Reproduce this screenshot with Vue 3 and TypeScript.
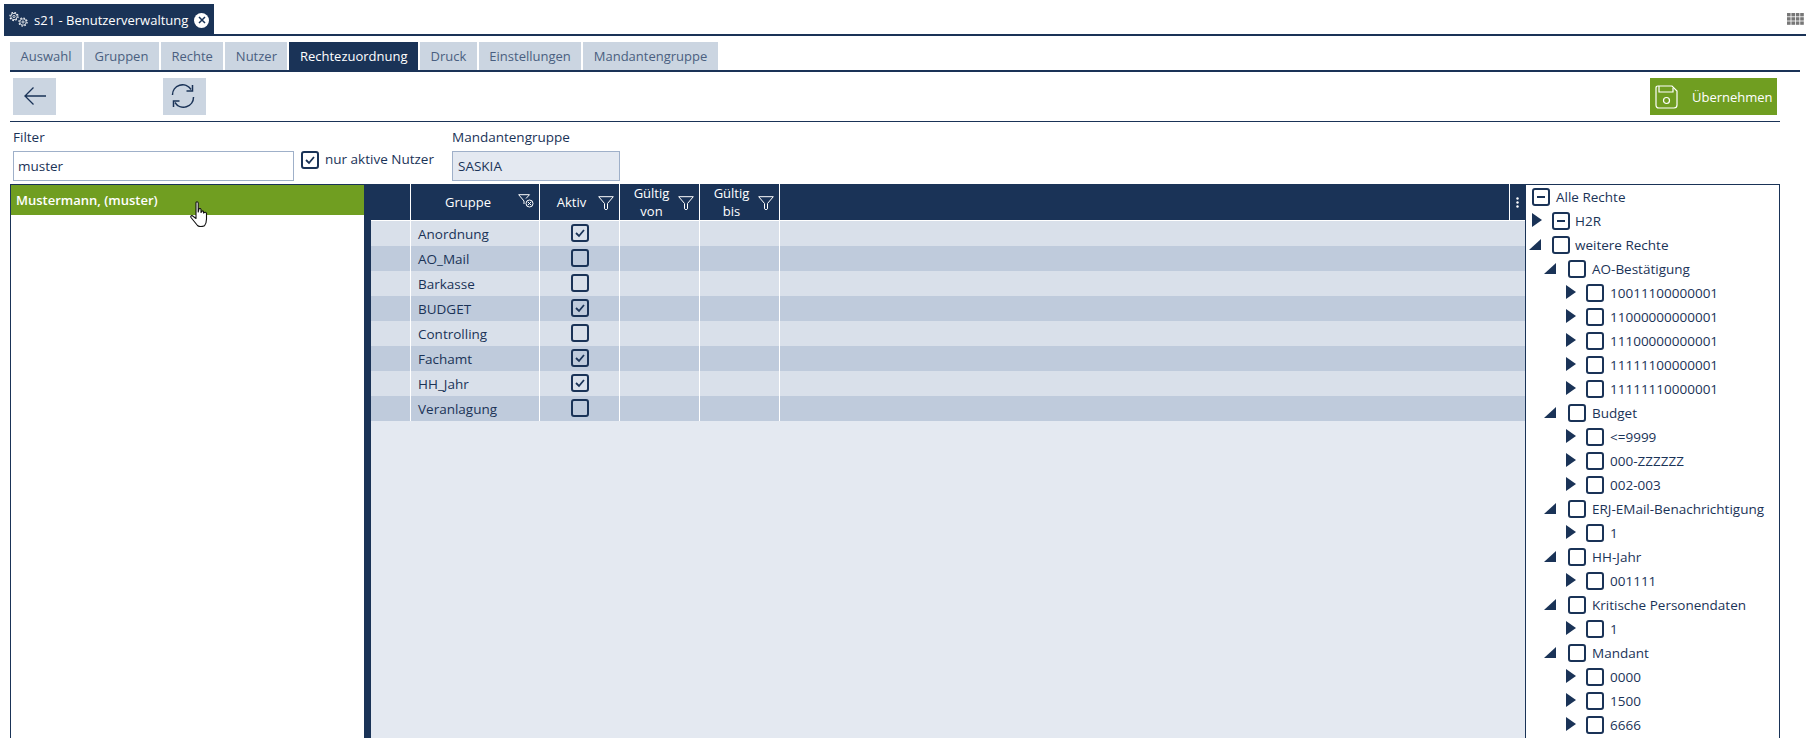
<script setup lang="ts">
const tabs = ['Auswahl', 'Gruppen', 'Rechte', 'Nutzer', 'Rechtezuordnung', 'Druck', 'Einstellungen', 'Mandantengruppe']
const rows = [
  { name: 'Anordnung', on: true },
  { name: 'AO_Mail', on: false },
  { name: 'Barkasse', on: false },
  { name: 'BUDGET', on: true },
  { name: 'Controlling', on: false },
  { name: 'Fachamt', on: true },
  { name: 'HH_Jahr', on: true },
  { name: 'Veranlagung', on: false },
]
type Node = { t: string; l: number; a?: 'r' | 'd'; m?: boolean }
const tree: Node[] = [
  { t: 'Alle Rechte', l: 0, m: true },
  { t: 'H2R', l: 1, a: 'r', m: true },
  { t: 'weitere Rechte', l: 1, a: 'd' },
  { t: 'AO-Bestätigung', l: 2, a: 'd' },
  { t: '10011100000001', l: 3, a: 'r' },
  { t: '11000000000001', l: 3, a: 'r' },
  { t: '11100000000001', l: 3, a: 'r' },
  { t: '11111100000001', l: 3, a: 'r' },
  { t: '11111110000001', l: 3, a: 'r' },
  { t: 'Budget', l: 2, a: 'd' },
  { t: '<=9999', l: 3, a: 'r' },
  { t: '000-ZZZZZZ', l: 3, a: 'r' },
  { t: '002-003', l: 3, a: 'r' },
  { t: 'ERJ-EMail-Benachrichtigung', l: 2, a: 'd' },
  { t: '1', l: 3, a: 'r' },
  { t: 'HH-Jahr', l: 2, a: 'd' },
  { t: '001111', l: 3, a: 'r' },
  { t: 'Kritische Personendaten', l: 2, a: 'd' },
  { t: '1', l: 3, a: 'r' },
  { t: 'Mandant', l: 2, a: 'd' },
  { t: '0000', l: 3, a: 'r' },
  { t: '1500', l: 3, a: 'r' },
  { t: '6666', l: 3, a: 'r' },
]
const indent = [6, 6, 18, 40]
const funnel = 'M.7 .7H15.300L9.500 7.500V12.800L8 14L6.500 12.800V7.500Z'
</script>

<template>
  <div class="app">
    <header class="topbar">
      <div class="apptab">
        <svg class="gears" width="20" height="20" viewBox="0 0 20 20" fill="none" stroke="#fff">
          <circle cx="6" cy="6.500" r="4.100" stroke-width="1.100" stroke-dasharray="1.600 1.620" />
          <circle cx="6" cy="6.500" r="3.200" stroke-width=".8" />
          <circle cx="6" cy="6.500" r="1.100" stroke-width=".8" />
          <circle cx="15" cy="12" r="4.100" stroke-width="1.100" stroke-dasharray="1.600 1.620" />
          <circle cx="15" cy="12" r="3.200" stroke-width=".8" />
          <circle cx="15" cy="12" r="1.100" stroke-width=".8" />
        </svg>
        <span class="apptitle">s21 - Benutzerverwaltung</span>
        <span class="close">
          <svg width="8" height="8" viewBox="0 0 8 8" stroke="#1a3357" stroke-width="1.500"><path d="M1 1L7 7M7 1L1 7" /></svg>
        </span>
      </div>
      <svg class="grid" width="17" height="12" viewBox="0 0 17 12" fill="#777">
        <template v-for="y in 3" :key="y">
          <rect v-for="x in 4" :key="x" :x="(x - 1) * 4.4" :y="(y - 1) * 4.2" width="3.6" height="3.4" />
        </template>
      </svg>
    </header>

    <nav class="tabs">
      <span v-for="t in tabs" :key="t" class="tab" :class="{ active: t === 'Rechtezuordnung' }">{{ t }}</span>
    </nav>

    <div class="toolbar">
      <button class="tool">
        <svg width="24" height="20" viewBox="0 0 24 20" fill="none" stroke="#1a3357" stroke-width="1.300"><path d="M23 10H1.500M10.500 1.500L2 10L10.500 18.500" /></svg>
      </button>
      <button class="tool refresh">
        <svg width="24" height="24" viewBox="0 0 24 24" fill="none" stroke="#1a3357" stroke-width="1.500">
          <path d="M1.500 11A10 10 0 0 1 20 5.500M22.500 13A10 10 0 0 1 4 18.500" />
          <path d="M21.500 1V7H15.500M2.500 23V17H8.500" />
        </svg>
      </button>
      <button class="save">
        <svg width="23" height="24" viewBox="0 0 23 24" fill="none" stroke="#fff" stroke-width="1.200">
          <path d="M3 1H17L22 6V20Q22 23 19 23H4Q1 23 1 20V3Q1 1 3 1Z" />
          <path d="M4 1V7H18V3" />
          <circle cx="11.500" cy="15.500" r="3" />
        </svg>
        <span>Übernehmen</span>
      </button>
    </div>

    <section class="filters">
      <div class="field filter">
        <label>Filter</label>
        <div class="input">muster</div>
      </div>
      <div class="active-check">
        <span class="cb on">
          <svg width="12" height="10" viewBox="0 0 12 10" fill="none" stroke="#1a3357" stroke-width="1.800"><path d="M2 5L5 8L10 2" /></svg>
        </span>
        <span class="check-text">nur aktive Nutzer</span>
      </div>
      <div class="field group">
        <label>Mandantengruppe</label>
        <div class="input readonly">SASKIA</div>
      </div>
    </section>

    <main class="body">
      <aside class="users">
        <div class="user">Mustermann, (muster)</div>
        <svg class="hand" width="18" height="26" viewBox="0 0 18 26">
          <path d="M6 2Q6 .8 7 .8T8.200 2V11L9 7.800Q10.500 7 11 8.500V11.500Q12.500 8.800 13.500 10.500V12Q15.800 10.200 16.500 12.500V18Q16.500 22 14.500 24.800Q10 26.500 7.500 24.500L1 16.500Q.2 14.800 2 14.500L6 17.500Z" fill="#fff" stroke="#111" stroke-width="1.100" stroke-linejoin="round" />
        </svg>
      </aside>
      <div class="table">
        <div class="thead">
          <div class="th c0"></div>
          <div class="th c1">
            <span class="label">Gruppe</span>
            <svg class="fi" width="16" height="14" viewBox="0 0 16 14" fill="none" stroke="#fff" stroke-width="1"><path d="M.7 .7H11.500L8 4.500M.7 .7L6 7V10" /><circle cx="11.500" cy="9.500" r="3.500" /><path d="M9.800 7.800L13.200 11.200M13.200 7.800L9.800 11.200" /></svg>
          </div>
          <div class="th c2">
            <span class="label">Aktiv</span>
            <svg class="fi plain" width="16" height="14" viewBox="0 0 16 14" fill="none" stroke="#fff" stroke-width="1"><path :d="funnel" /></svg>
          </div>
          <div class="th c3">
            <span class="label">Gültig<br />von</span>
            <svg class="fi plain" width="16" height="14" viewBox="0 0 16 14" fill="none" stroke="#fff" stroke-width="1"><path :d="funnel" /></svg>
          </div>
          <div class="th c3">
            <span class="label">Gültig<br />bis</span>
            <svg class="fi plain" width="16" height="14" viewBox="0 0 16 14" fill="none" stroke="#fff" stroke-width="1"><path :d="funnel" /></svg>
          </div>
          <div class="th rest"></div>
          <div class="th menu">
            <svg width="3" height="11" viewBox="0 0 3 11" fill="#fff"><circle cx="1.500" cy="1.500" r="1.200" /><circle cx="1.500" cy="5.500" r="1.200" /><circle cx="1.500" cy="9.500" r="1.200" /></svg>
          </div>
        </div>
        <div class="tbody">
          <div v-for="r in rows" :key="r.name" class="tr">
            <div class="td c0"></div>
            <div class="td c1 name">{{ r.name }}</div>
            <div class="td c2 center">
              <span class="cb">
                <svg v-if="r.on" width="12" height="10" viewBox="0 0 12 10" fill="none" stroke="#1a3357" stroke-width="1.800"><path d="M2 5L5 8L10 2" /></svg>
              </span>
            </div>
            <div class="td c3"></div>
            <div class="td c3"></div>
            <div class="td rest"></div>
          </div>
        </div>
      </div>
      <aside class="tree">
        <div v-for="(n, i) in tree" :key="i" class="node" :class="'l' + n.l" :style="{ paddingLeft: indent[n.l] + 'px' }">
          <span v-if="n.a" class="arrow" :class="n.a === 'd' ? 'down' : 'right'">
            <svg v-if="n.a === 'r'" width="10" height="14" viewBox="0 0 10 14" fill="#1a3357"><path d="M0 0L10 7L0 14Z" /></svg>
            <svg v-else width="12" height="11" viewBox="0 0 12 11" fill="#1a3357"><path d="M12 0V11H0Z" /></svg>
          </span>
          <span class="cb">
            <i v-if="n.m" class="minus"></i>
          </span>
          <span class="ntext">{{ n.t }}</span>
        </div>
      </aside>
    </main>
  </div>
</template>

<style>
html, body { margin: 0; background: #fff; overflow: hidden; }
</style>

<style scoped>
.app {
  width: 1812px;
  height: 738px;
  overflow: hidden;
  display: flex;
  flex-direction: column;
  font-family: "Open Sans", sans-serif;
  font-size: 13px;
  color: #1a3357;
  box-sizing: border-box;
  padding-top: 4px;
}
.topbar {
  height: 32px;
  box-sizing: border-box;
  margin-left: 4px;
  margin-right: 6px;
  border-bottom: 2px solid #1a3357;
  display: flex;
  justify-content: space-between;
  flex-shrink: 0;
}
.apptab {
  height: 32px;
  width: 210px;
  background: #1a3357;
  color: #fff;
  display: flex;
  align-items: center;
  padding-left: 4px;
  box-sizing: border-box;
}
.gears { flex-shrink: 0; margin-right: 6px; }
.apptitle { font-size: 13px; white-space: nowrap; }
.close {
  width: 15px;
  height: 15px;
  border-radius: 50%;
  background: #fff;
  margin-left: 6px;
  display: flex;
  align-items: center;
  justify-content: center;
}
.grid { margin-top: 9px; margin-right: 2px; }
.tabs {
  margin: 6px 12px 0 10px;
  height: 30px;
  box-sizing: border-box;
  border-bottom: 2px solid #1a3357;
  display: flex;
  gap: 2px;
  flex-shrink: 0;
}
.tab {
  height: 28px;
  line-height: 28px;
  padding: 0 10.500px;
  background: #cbd5e1;
  color: #4a5f80;
  font-size: 13px;
}
.tab.active { background: #1a3357; color: #fff; }
.toolbar {
  margin: 6px 32px 0 10px;
  height: 44px;
  border-bottom: 1px solid #1a3357;
  display: flex;
  align-items: flex-start;
  padding: 0 3px;
  box-sizing: border-box;
  flex-shrink: 0;
}
.tool {
  width: 43px;
  height: 37px;
  background: #cbd5e1;
  border: 0;
  padding: 0 0 2px;
  display: flex;
  align-items: center;
  justify-content: center;
}
.refresh { margin-left: 107px; padding-right: 3px; }
.save {
  margin-left: auto;
  margin-right: 0;
  width: 127px;
  height: 37px;
  background: #709e21;
  color: #fff;
  border: 0;
  padding: 0 0 0 5px;
  display: flex;
  align-items: center;
  font: inherit;
  font-size: 13px;
  box-sizing: border-box;
}
.save span { margin-left: 14px; }
.filters {
  display: flex;
  height: 62px;
  padding: 7px 0 0 13px;
  box-sizing: border-box;
  flex-shrink: 0;
  font-size: 13.500px;
}
.field label {
  display: block;
  height: 22px;
  line-height: 16px;
}
.input {
  height: 30px;
  line-height: 28px;
  border: 1px solid #9fb0c9;
  box-sizing: border-box;
  padding-left: 4px;
}
.filter .input { width: 281px; }
.readonly { background: #e4e9f1; }
.active-check {
  display: flex;
  align-items: center;
  gap: 6px;
  height: 20px;
  margin: 21px 0 0 7px;
  width: 151px;
  white-space: nowrap;
}
.check-text { padding-bottom: 2px; }
.group .input { width: 168px; padding-left: 5px; }
.cb {
  width: 18px;
  height: 18px;
  box-sizing: border-box;
  border: 2px solid #1a3357;
  border-radius: 3px;
  background: transparent;
  display: inline-flex;
  align-items: center;
  justify-content: center;
  flex-shrink: 0;
}
.minus { width: 8px; height: 2px; background: #1a3357; display: block; }
.body {
  flex: 1;
  display: flex;
  margin-left: 10px;
  margin-right: 32px;
  min-height: 0;
}
.users {
  width: 354px;
  flex-shrink: 0;
  border-left: 1px solid #1a3357;
  border-top: 1px solid #1a3357;
  box-sizing: border-box;
  position: relative;
}
.user {
  height: 30px;
  line-height: 31px;
  background: #709e21;
  color: #fff;
  font-weight: 600;
  padding-left: 5px;
}
.hand { position: absolute; left: 179px; top: 16px; }
.table {
  width: 1161px;
  flex-shrink: 0;
  background: #e4e9f1;
  border-left: 7px solid #1a3357;
  box-sizing: border-box;
  display: flex;
  flex-direction: column;
}
.thead {
  height: 36px;
  margin-left: -7px;
  background: #1a3357;
  display: flex;
  flex-shrink: 0;
}
.th {
  position: relative;
  color: #fff;
  display: flex;
  align-items: center;
  justify-content: center;
  box-sizing: border-box;
  border-right: 1px solid #fff;
  line-height: 18.500px;
  text-align: center;
}
.thead .c0 { width: 47px; }
.c0 { width: 40px; flex-shrink: 0; }
.c1 { width: 129px; flex-shrink: 0; }
.c2 { width: 80px; flex-shrink: 0; }
.c3 { width: 80px; flex-shrink: 0; }
.rest { flex: 1; }
.menu { width: 15px; flex-shrink: 0; border-right: 0; }
.th .label { margin-right: 16px; }
.c1 .label { margin-right: 14px; }
.fi { position: absolute; right: 5px; top: 12px; }
.c1 .fi { top: 10px; }
.tbody { display: flex; flex-direction: column; border-top: 1px solid #fff; }
.tr { display: flex; height: 25px; background: #d9e0ea; font-size: 13.500px; }
.tr:nth-child(even) { background: #bfcbdc; }
.td { box-sizing: border-box; border-right: 1px solid #fff; }
.rest.td { border-right: 0; }
.name { padding-left: 7px; line-height: 26px; }
.center { display: flex; align-items: center; justify-content: center; padding-bottom: 1px; }
.tree {
  flex: 1;
  border: 1px solid #1a3357;
  border-bottom: 0;
  box-sizing: border-box;
  overflow: hidden;
  font-size: 13.500px;
}
.node {
  height: 24px;
  display: flex;
  align-items: center;
  white-space: nowrap;
  box-sizing: border-box;
}
.arrow {
  width: 20px;
  display: flex;
  align-items: center;
  flex-shrink: 0;
  padding-bottom: 2px;
  box-sizing: border-box;
}
.arrow.down svg { margin-left: -3px; }
.ntext { margin-left: 6px; }
.l1 .ntext { margin-left: 5px; }
.l2 .arrow.down svg { margin-left: 0; }
.l2 .arrow { width: 24px; }
.l3 .arrow { width: 20px; }
.l3 .ntext { margin-left: 6px; }
</style>
